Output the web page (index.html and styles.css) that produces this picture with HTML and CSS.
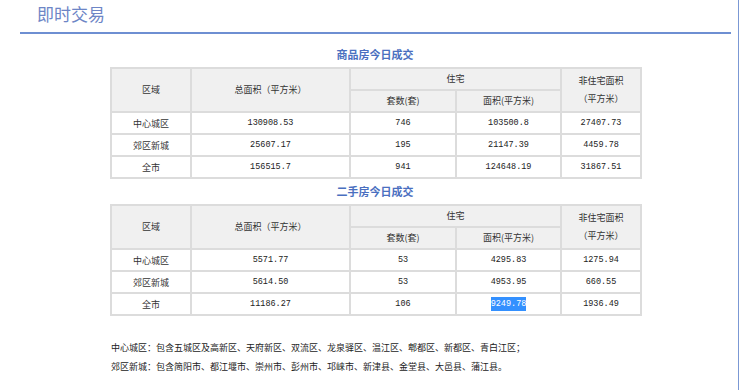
FILE: index.html
```html
<!DOCTYPE html>
<html lang="zh-CN">
<head>
    <meta charset="UTF-8">
    <title>即时交易</title>
    <link rel="stylesheet" href="styles.css">
</head>
<body>

<div class="page">
    <div class="head">
        <h1>即时交易</h1>
    </div>

    <h2 class="table-title first">商品房今日成交</h2>
    <table class="deal">
        <tr>
            <th rowspan="2" class="c1">区域</th>
            <th rowspan="2" class="c2">总面积（平方米）</th>
            <th colspan="2">住宅</th>
            <th rowspan="2" class="c5">非住宅面积<br>（平方米）</th>
        </tr>
        <tr>
            <th class="c3">套数(套)</th>
            <th class="c4">面积(平方米)</th>
        </tr>
        <tr>
            <td>中心城区</td>
            <td class="num">130908.53</td>
            <td class="num">746</td>
            <td class="num">103500.8</td>
            <td class="num">27407.73</td>
        </tr>
        <tr>
            <td>郊区新城</td>
            <td class="num">25607.17</td>
            <td class="num">195</td>
            <td class="num">21147.39</td>
            <td class="num">4459.78</td>
        </tr>
        <tr>
            <td>全市</td>
            <td class="num">156515.7</td>
            <td class="num">941</td>
            <td class="num">124648.19</td>
            <td class="num">31867.51</td>
        </tr>
    </table>

    <h2 class="table-title">二手房今日成交</h2>
    <table class="deal">
        <tr>
            <th rowspan="2" class="c1">区域</th>
            <th rowspan="2" class="c2">总面积（平方米）</th>
            <th colspan="2">住宅</th>
            <th rowspan="2" class="c5">非住宅面积<br>（平方米）</th>
        </tr>
        <tr>
            <th class="c3">套数(套)</th>
            <th class="c4">面积(平方米)</th>
        </tr>
        <tr>
            <td>中心城区</td>
            <td class="num">5571.77</td>
            <td class="num">53</td>
            <td class="num">4295.83</td>
            <td class="num">1275.94</td>
        </tr>
        <tr>
            <td>郊区新城</td>
            <td class="num">5614.50</td>
            <td class="num">53</td>
            <td class="num">4953.95</td>
            <td class="num">660.55</td>
        </tr>
        <tr>
            <td>全市</td>
            <td class="num">11186.27</td>
            <td class="num">106</td>
            <td class="num"><span class="selected">9249.78</span></td>
            <td class="num">1936.49</td>
        </tr>
    </table>

    <div class="notes">
        <p>中心城区：包含五城区及高新区、天府新区、双流区、龙泉驿区、温江区、郫都区、新都区、青白江区；</p>
        <p>郊区新城：包含简阳市、都江堰市、崇州市、彭州市、邛崃市、新津县、金堂县、大邑县、蒲江县。</p>
    </div>
</div>

</body>
</html>
```

FILE: styles.css
```css
body {
    margin: 0;
    padding: 0;
    background-color: #fff;
    font-family: "Noto Sans CJK SC", "Liberation Sans", sans-serif;
    font-size: 9px;
    color: #333;
}
.page {
    width: 738px;
    height: 390px;
    border-right: 1px solid #7b98d4;
    overflow: hidden;
}
.head {
    margin: 0 7px 0 20px;
    padding: 4px 0 8px 17px;
    border-bottom: 2px solid #6e8fd2;
}
.head h1 {
    margin: 0;
    font-size: 17px;
    line-height: 20px;
    font-weight: normal;
    color: #6d85c6;
}
.table-title {
    margin: 5px 0 6px 0;
    text-align: center;
    font-size: 11px;
    line-height: 14px;
    font-weight: bold;
    color: #4a6fc0;
    padding-left: 12px;
}
.table-title.first {
    margin-top: 13px;
}
table.deal {
    margin-left: 110px;
    border-collapse: collapse;
    table-layout: fixed;
}
.deal th, .deal td {
    border: 2px solid #dcdcdc;
    height: 20px;
    padding: 0;
    text-align: center;
    font-weight: normal;
}
.deal th {
    background-color: #f0f0f0;
    line-height: 18px;
}
.deal .c1 { width: 78px; }
.deal .c2 { width: 157px; }
.deal .c3 { width: 104px; }
.deal .c4 { width: 103px; }
.deal .c5 { width: 78px; }
.deal td.num {
    font-family: "Liberation Mono", monospace;
    font-size: 8.5px;
    color: #222;
}
.selected {
    background-color: #3390ff;
    color: #fff;
    padding: 2px 0;
}
.notes {
    margin: 22px 0 0 111px;
    color: #222;
}
.notes p {
    margin: 0;
    line-height: 19px;
}
```
